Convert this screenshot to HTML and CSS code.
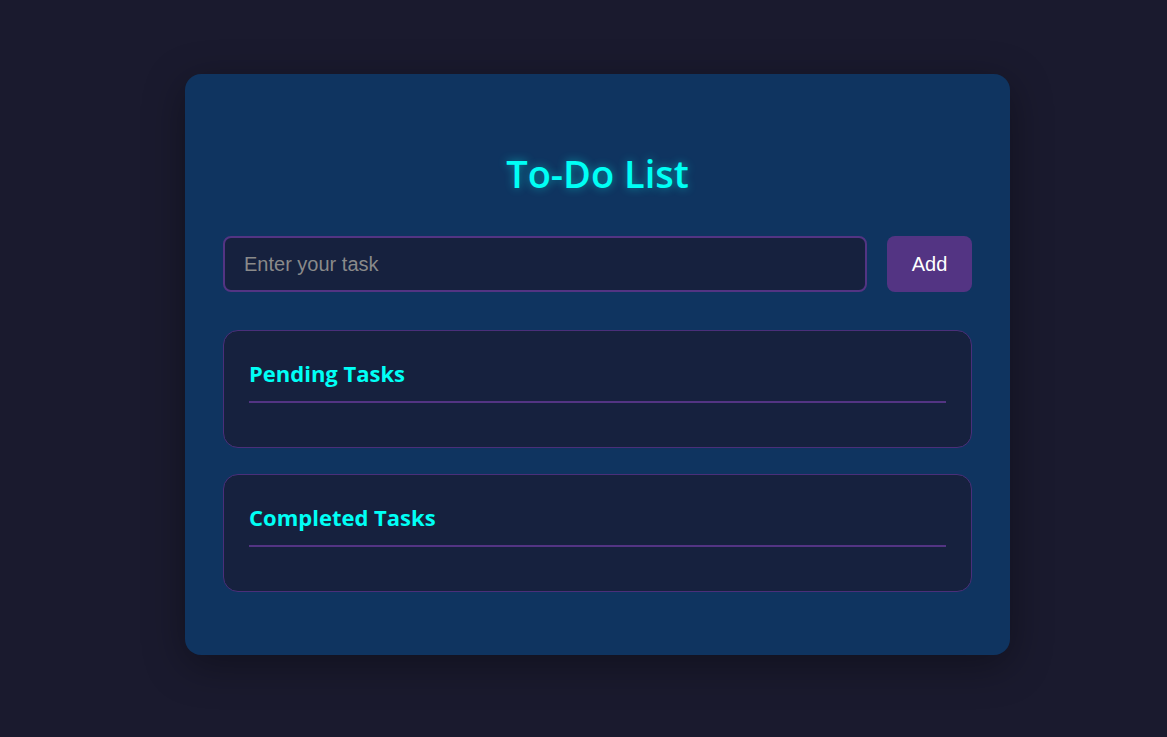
FILE: index.html
```html
<!DOCTYPE html>
<html lang="en">
<head>
<meta charset="utf-8">
<title>To-Do List</title>
<link rel="stylesheet" href="styles.css">
</head>
<body>
<main class="card">
  <h1 class="title">To-Do List</h1>
  <div class="entry">
    <input class="task-input" type="text" placeholder="Enter your task">
    <button class="add-btn">Add</button>
  </div>
  <section class="list">
    <h2 class="list-title">Pending Tasks</h2>
    <ul class="items"></ul>
  </section>
  <section class="list">
    <h2 class="list-title">Completed Tasks</h2>
    <ul class="items"></ul>
  </section>
</main>
</body>
</html>
```
FILE: styles.css
```css
html, body {
  margin: 0;
  padding: 0;
  background: #1a1a2e;
  height: 100%;
}
body {
  font-family: "Open Sans", "Noto Sans", sans-serif;
  overflow: hidden;
}
.card {
  box-sizing: border-box;
  width: 825px;
  height: 581px;
  margin: 74px 0 0 185px;
  padding: 70px 38px 38px;
  background: #0f3460;
  border-radius: 16px;
  box-shadow: 0 10px 40px rgba(0, 0, 0, 0.35);
}
.title {
  margin: 0 0 34px;
  text-align: center;
  font-size: 38px;
  line-height: 58px;
  font-weight: 600;
  color: #00fff5;
  text-shadow: 0 0 10px rgba(0, 255, 245, 0.45);
}
.entry {
  display: flex;
  gap: 20px;
  margin-bottom: 38px;
}
.task-input {
  flex: 1;
  box-sizing: border-box;
  height: 56px;
  padding: 0 19px;
  background: #16213e;
  border: 2px solid #533483;
  border-radius: 8px;
  font-family: "Liberation Sans", Arial, sans-serif;
  font-size: 20px;
  color: #fff;
  outline: none;
}
.task-input::placeholder {
  color: #8a8a8a;
}
.add-btn {
  box-sizing: border-box;
  width: 85px;
  height: 56px;
  background: #533483;
  border: none;
  border-radius: 8px;
  color: #fff;
  font-family: "Liberation Sans", Arial, sans-serif;
  font-size: 20px;
}
.list {
  box-sizing: border-box;
  height: 118px;
  margin-bottom: 26px;
  padding: 24px 25px 0;
  background: #16213e;
  border: 1px solid #4a2f7a;
  border-radius: 15px;
}
.list-title {
  margin: 0;
  padding-bottom: 10px;
  border-bottom: 2px solid #533483;
  font-size: 22px;
  line-height: 36px;
  font-weight: 700;
  color: #00fff5;
}
.items {
  margin: 0;
  padding: 0;
  list-style: none;
}
```
